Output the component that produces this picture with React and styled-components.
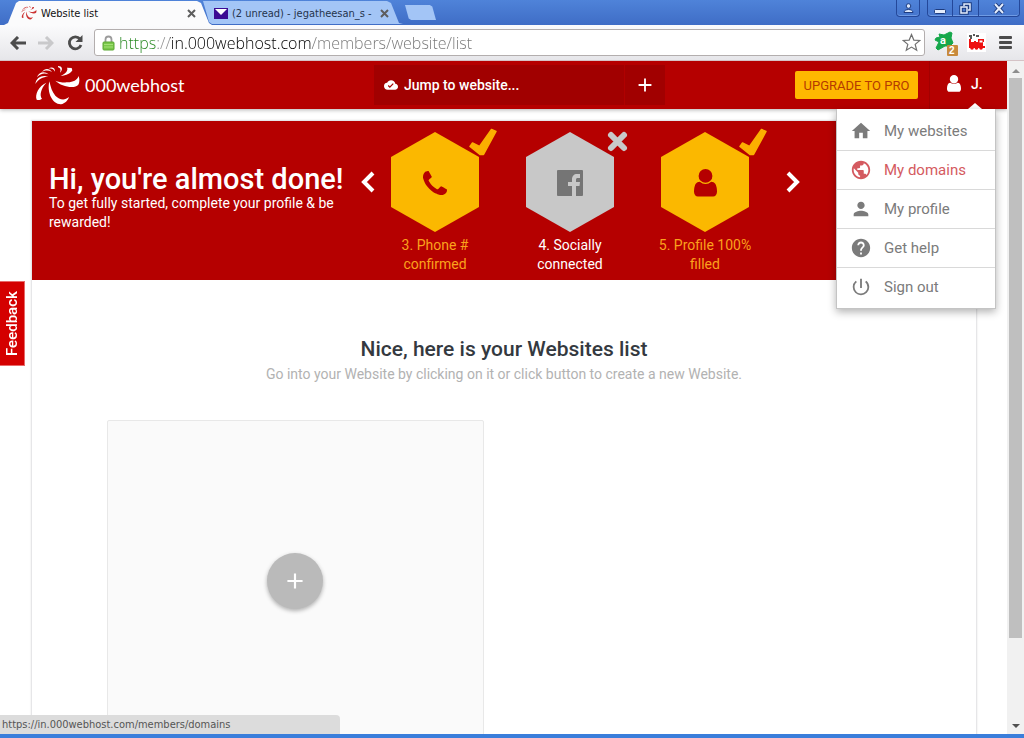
import React from "react";
import styled, { createGlobalStyle } from "styled-components";
import {
  MdAdd,
  MdCloudDone,
  MdHelp,
  MdHome,
  MdPerson,
  MdPowerSettingsNew,
  MdPublic,
} from "react-icons/md";

const GlobalStyle = createGlobalStyle`
  * {
    box-sizing: border-box;
  }
  body {
    margin: 0;
    font-family: Roboto, "Liberation Sans", sans-serif;
    background: #fff;
  }
  button, input {
    font: inherit;
    border: 0;
    padding: 0;
    background: none;
    color: inherit;
  }
  a {
    color: inherit;
    text-decoration: none;
  }
  h1, h2, p, ul, ol {
    margin: 0;
    padding: 0;
  }
  ul, ol {
    list-style: none;
  }
  svg {
    display: block;
    flex-shrink: 0;
  }
`;

/* ---------- browser window ---------- */

const Window = styled.div`
  position: relative;
  display: flex;
  flex-direction: column;
  height: 100vh;
  overflow: hidden;
  border-bottom: 4px solid #3a7edb;
`;

const TitleBar = styled.div`
  display: flex;
  height: 25px;
  padding-left: 4px;
  background: linear-gradient(#4f83d9, #3f6dc6);
`;

const Tab = styled.div`
  display: flex;
  align-items: center;
  gap: 4px;
  width: ${(p) => (p.$active ? 208 : 200)}px;
  height: 24px;
  margin-top: 1px;
  margin-left: ${(p) => (p.$active ? 0 : -9)}px;
  padding: 0 ${(p) => (p.$active ? 16 : 14)}px 0 ${(p) => (p.$active ? 17 : 11)}px;
  font: 11px "DejaVu Sans Condensed", "DejaVu Sans", sans-serif;
  color: ${(p) => (p.$active ? "#111" : "#25344d")};
  background: ${(p) => (p.$active ? "#fbfbfc" : "#a3c5f6")};
  clip-path: ${(p) =>
    p.$active
      ? "polygon(0 100%, 4px 92%, 12px 8%, 15px 0, 193px 0, 197px 8%, 205px 92%, 100% 100%)"
      : "polygon(0 0, 184px 0, 188px 8%, 196px 92%, 100% 96%, 9px 96%, 6px 88%)"};
`;

const TabTitle = styled.span`
  flex: 1;
  overflow: hidden;
  white-space: nowrap;
`;

const TabClose = styled.button`
  display: flex;
  color: #5d5d5d;
`;

const NewTab = styled.button`
  width: 31px;
  height: 15px;
  margin: 5px 0 0 2px;
  background: #a3c5f6;
  clip-path: polygon(0 0, 80% 0, 88% 10%, 100% 100%, 20% 100%, 12% 90%);
`;

const WindowButtons = styled.div`
  display: flex;
  gap: 7px;
  height: 17px;
  margin-left: auto;
  padding-right: 4px;
`;

const ButtonGroup = styled.div`
  display: flex;
  border: 1px solid #24489a;
  border-top: 0;
  border-radius: 0 0 4px 4px;
  box-shadow: inset 0 -1px #6f9be4;
`;

const WindowButton = styled.button`
  display: flex;
  align-items: center;
  justify-content: center;
  width: ${(p) => p.$width}px;

  & + & {
    border-left: 1px solid #24489a;
  }
`;

const Toolbar = styled.div`
  display: flex;
  align-items: center;
  height: 36px;
  padding-left: 8px;
  background: linear-gradient(#fbfbfc, #e6e6ea);
  border-bottom: 1px solid #d5c3c6;
`;

const ToolButton = styled.button`
  display: flex;
  align-items: center;
  justify-content: center;
  width: ${(p) => p.$width}px;
  color: ${(p) => (p.$dim ? "#c9c9cb" : "#4c4c4c")};
`;

const AddressBar = styled.label`
  display: flex;
  flex: 1;
  align-items: center;
  gap: 4px;
  height: 27px;
  margin-left: 9px;
  padding: 0 3px 0 7px;
  background: #fff;
  border: 1px solid #b3aeae;
  border-radius: 3px;
`;

/* scheme, separator, host and path each get their own colour */
const Address = styled.input`
  flex: 1;
  min-width: 0;
  height: 24px;
  outline: 0;
  font: 300 16px "Open Sans", "Noto Sans", sans-serif;
  color: #222;
  background: linear-gradient(
    90deg,
    #23861c 38px,
    #8a8a8a 38px 51px,
    #000 51px 192px,
    #757575 192px
  );
  background-clip: text;
  -webkit-text-fill-color: transparent;
`;

const StatusBubble = styled.div`
  position: absolute;
  left: 0;
  bottom: 0;
  width: 340px;
  height: 19px;
  padding-left: 2px;
  font: 11px/20px "DejaVu Sans Condensed", "DejaVu Sans", sans-serif;
  color: #555;
  background: #dcdcdc;
  border-radius: 0 4px 0 0;
`;

const Viewport = styled.div`
  display: flex;
  flex: 1;
  min-height: 0;
`;

const ScrollBar = styled.div`
  display: flex;
  flex-direction: column;
  align-items: center;
  width: 17px;
  padding: 7px 0 5px;
  background: #f1f1f1;
`;

const Thumb = styled.div`
  width: 13px;
  height: 560px;
  margin-top: 5px;
  margin-bottom: auto;
  background: #bfbfbf;
`;

/* ---------- page ---------- */

const Page = styled.div`
  position: relative;
  flex: 1;
  min-width: 0;
  overflow: hidden;
`;

const Header = styled.header`
  position: relative;
  display: flex;
  align-items: center;
  height: 48px;
  padding-left: 34px;
  color: #fff;
  background: #b50000;
  box-shadow: 0 1px 4px rgba(0, 0, 0, 0.3);
`;

const Logo = styled.a`
  display: flex;
  align-items: center;
  gap: 4px;
  width: 340px;
  font: 18px/40px Lato, sans-serif;
`;

const JumpBar = styled.div`
  display: flex;
  width: 291px;
  height: 40px;
  background: #a10000;
`;

const JumpField = styled.label`
  display: flex;
  flex: 1;
  align-items: center;
  gap: 6px;
  padding-left: 10px;
`;

const JumpInput = styled.input`
  flex: 1;
  min-width: 0;
  outline: 0;
  font-size: 14px;
  font-weight: 500;

  &::placeholder {
    color: #fff;
    opacity: 1;
  }
`;

const JumpAdd = styled.button`
  display: flex;
  align-items: center;
  justify-content: center;
  width: 41px;
  border-left: 1px solid #b00000;
`;

const Account = styled.div`
  display: flex;
  align-items: center;
  align-self: stretch;
  margin-left: auto;
`;

const Upgrade = styled.button`
  width: 123px;
  height: 28px;
  margin-right: 11px;
  font-size: 13px;
  color: #b53a00;
  background: #ffb800;
  border-radius: 2px;
`;

const UserButton = styled.button`
  position: relative;
  display: flex;
  align-items: center;
  align-self: stretch;
  gap: 10px;
  width: 78px;
  padding: 0 0 3px 17px;
  font-size: 14px;
  font-weight: 500;
  border-left: 1px solid #a30000;

  &::after {
    content: "";
    position: absolute;
    right: 25px;
    bottom: 0;
    border: 7px solid transparent;
    border-top: 0;
    border-bottom: 6px solid #fff;
  }
`;

const Menu = styled.ul`
  position: absolute;
  z-index: 1;
  top: 48px;
  right: 11px;
  width: 160px;
  padding: 2px 0;
  background: #fff;
  border: 1px solid #c4c4c4;
  border-top: 0;
  box-shadow: 0 3px 8px rgba(0, 0, 0, 0.3);
`;

const MenuItem = styled.li`
  & + & {
    border-top: 1px solid #d9d9d9;
  }
`;

const MenuLink = styled.a`
  display: flex;
  align-items: center;
  gap: 12px;
  height: 38px;
  padding-left: 13px;
  font-size: 15px;
  color: ${(p) => (p.$active ? "#d45a60" : "#7b7b7b")};

  ${MenuItem}:first-child & {
    height: 39px;
  }
`;

const Content = styled.main`
  margin: 11px 30px 0 31px;
  background: #fff;
  border: 1px solid #e6e6e8;
  box-shadow: 0 0 2px rgba(0, 0, 0, 0.1);
`;

const Banner = styled.section`
  display: flex;
  height: 159px;
  padding-left: 17px;
  color: #fff;
  background: #b50000;
`;

const Greeting = styled.div`
  width: 312px;
  padding-top: 43px;
`;

const GreetingTitle = styled.h1`
  font-size: 29px;
  line-height: 30px;
  font-weight: 500;
  white-space: nowrap;
`;

const GreetingText = styled.p`
  width: 290px;
  font-size: 14px;
  line-height: 19px;
`;

const Arrow = styled.button`
  display: flex;
  align-self: flex-start;
  margin-top: 50px;
`;

const Steps = styled.ol`
  display: flex;
  gap: 23px;
  margin: 0 25px 0 4px;
`;

const Step = styled.li`
  width: 112px;
  padding-top: 11px;
  text-align: center;
`;

const StepShape = styled.div`
  position: relative;
  width: 88px;
  margin: 0 auto 4px;
`;

const Hexagon = styled.div`
  display: flex;
  align-items: center;
  justify-content: center;
  height: 100px;
  padding-top: 2px;
  color: ${(p) => (p.$done ? "#b50000" : "#757575")};
  background: ${(p) => (p.$done ? "#fbb800" : "#c8c8c8")};
  clip-path: polygon(50% 0, 100% 25%, 100% 75%, 50% 100%, 0 75%, 0 25%);
`;

const Badge = styled.span`
  position: absolute;
  top: -4px;
  right: -18px;
`;

const StepLabel = styled.p`
  font-size: 14px;
  line-height: 19px;
  color: ${(p) => (p.$done ? "#fba21c" : "#fff")};
`;

const Intro = styled.div`
  padding: 56px 0 34px;
  text-align: center;
`;

const IntroTitle = styled.h2`
  font-size: 21px;
  line-height: 26px;
  font-weight: 500;
  color: #34393f;
`;

const IntroText = styled.p`
  font-size: 14px;
  line-height: 24px;
  color: #b2b2b2;
`;

const Sites = styled.div`
  display: grid;
  grid-template-columns: 1fr 1fr;
  gap: 40px;
  padding: 0 76px 40px 75px;
`;

const NewSite = styled.div`
  display: flex;
  align-items: center;
  justify-content: center;
  height: 322px;
  background: #fafafa;
  border: 1px solid #e8e8e8;
  border-radius: 2px;
`;

const RoundButton = styled.button`
  display: flex;
  align-items: center;
  justify-content: center;
  width: 56px;
  height: 56px;
  color: #fff;
  background: #bababa;
  border-radius: 50%;
  box-shadow: 0 2px 4px rgba(0, 0, 0, 0.3);
`;

const Feedback = styled.button`
  position: absolute;
  left: 0;
  top: 220px;
  width: 25px;
  height: 85px;
  font-size: 15px;
  font-weight: 500;
  color: #fff;
  background: #d40000;
  border: 1px solid #e86a6a;
  border-right: 0;
  writing-mode: vertical-rl;
  transform: rotate(180deg);
`;

/* ---------- drawings ---------- */

const Swirl = ({ width, color = "#fff" }) => (
  <svg width={width} height={(width * 40) / 47} viewBox="104 26 141 120" fill={color}>
    <path d="M150 75C142 110 160 145 185 144c12-2 21-12 24-22-14 12-29 8-41-4-10-11-14-26-18-43z" />
    <path d="M168 73c17 17 57 26 69 12 4-6 4-16 1-26-5 13-16 18-33 19-15 1-27-1-37-5z" />
    <path d="M184 59c17-1 31-8 35-17l-2-7-14-1c4 8-3 17-19 25z" />
    <path d="M176 29c13 0 16 11 6 20 3-8 2-14-6-16z" />
    <path d="M141 79c-23 9-35 36-29 51 5 2 12 1 16-3-8-9-4-30 13-48z" />
    <path d="M108 83c3-20 20-28 39-22-17 0-29 7-39 22z" />
    <path d="M113 62c6-15 22-19 35-8-14-5-24-2-35 8z" />
    <path d="M128 47c8-12 22-12 30 0-10-5-19-6-30 0z" />
    <path d="M148 36c10-6 20-1 19 10-4-7-9-10-19-10z" />
  </svg>
);

const User = ({ width }) => (
  <svg width={width} height={(width * 6) / 5} viewBox="0 128 1280 1536" fill="currentColor">
    <path d="M1280 1399q0 109-62.500 187t-150.500 78h-854q-88 0-150.500-78t-62.500-187q0-85 8.500-160.500t31.500-152 58.500-131 94-89 134.500-34.500q131 128 313 128t313-128q76 0 134.500 34.500t94 89 58.500 131 31.500 152 8.500 160.500zm-256-887q0 159-112.500 271.500t-271.500 112.500-271.500-112.500-112.500-271.500 112.500-271.500 271.500-112.500 271.500 112.500 112.500 271.500z" />
  </svg>
);

const Phone = () => (
  <svg width="24" height="24" viewBox="0 0 1408 1408" fill="currentColor">
    <path d="M1408 1112q0 27-10 70.500t-21 68.500q-21 50-122 106-94 51-186 51-27 0-53-3.500t-57.500-12.500-47-14.500-55.500-20.500-49-18q-98-35-175-83-127-79-264-216t-216-264q-48-77-83-175-3-9-18-49t-20.500-55.500-14.500-47-12.500-57.500-3.500-53q0-92 51-186 56-101 106-122 25-11 68.500-21t70.500-10q14 0 21 3 18 6 53 76 11 19 30 54t35 63.500 31 53.500q3 4 17.500 25t21.500 35.500 7 28.500q0 20-28.500 50t-62 55-62 53-28.500 46q0 9 5 22.500t8.500 20.500 14 24 11.500 19q76 137 174 235t235 174q2 1 19 11.500t24 14 20.500 8.500 22.500 5q18 0 46-28.500t53-62 55-62 50-28.500q14 0 28.500 7t35.500 21.500 25 17.500q25 15 53.500 31t63.500 35 54 30q70 35 76 53 3 7 3 21z" />
  </svg>
);

const FacebookSquare = () => (
  <svg width="26" height="26" viewBox="0 0 26 26">
    <rect width="26" height="26" rx="1" fill="#757575" />
    <path
      d="M15 26V16h-4v-4h4V9.500C15 6 17 4 20 4h3v4h-2c-1.500 0-2 .6-2 2v2h4l-.5 4H19v10z"
      fill="#c8c8c8"
    />
  </svg>
);

const Check = () => (
  <svg width="28" height="28" viewBox="0 0 28 28" fill="#fbb000" stroke="#fbb000">
    <path
      d="M1 18.500L3.500 15l7 3.500L22.500 1.500 27 3.500 14.500 26.500 11 26.500z"
      strokeWidth="1.500"
      strokeLinejoin="round"
    />
  </svg>
);

const Cross = () => (
  <svg width="28" height="28" viewBox="0 0 28 28" stroke="#c8c8c8" strokeWidth="6" strokeLinecap="round">
    <path d="M7 7l13 13M20 7L7 20" />
  </svg>
);

const Chevron = ({ right }) => (
  <svg width="14" height="22" viewBox="0 0 14 22" fill="none" stroke="#fff" strokeWidth="4">
    <path d={right ? "M2 2l9 9-9 9" : "M12 2l-9 9 9 9"} />
  </svg>
);

const NavArrow = ({ forward }) => (
  <svg width="16" height="14" viewBox="0 0 16 14" fill="none" stroke="currentColor" strokeWidth="3">
    <path d={forward ? "M0 7h14M8 1l6 6-6 6" : "M16 7H2M8 1L2 7l6 6"} />
  </svg>
);

const Reload = () => (
  <svg width="16" height="16" viewBox="0 0 16 16" fill="none">
    <path d="M13 4A6 6 0 1 0 14 10" stroke="currentColor" strokeWidth="2.800" />
    <path d="M15.500 0v7h-7z" fill="currentColor" />
  </svg>
);

const CloseMark = () => (
  <svg width="9" height="9" viewBox="0 0 9 9" stroke="currentColor" strokeWidth="2">
    <path d="M1 1l7 7M8 1L1 8" />
  </svg>
);

const Mail = () => (
  <svg width="14" height="11" viewBox="0 0 14 11">
    <rect width="14" height="11" fill="#3c0b93" />
    <path d="M1 1l6 6 6-6" fill="#fff" />
  </svg>
);

const Lock = () => (
  <svg width="13" height="16" viewBox="0 0 13 16">
    <path d="M3.500 8V4.500a3 3 0 016 0V8" fill="none" stroke="#9b9b9b" strokeWidth="1.800" />
    <rect x="1" y="7" width="11" height="8" rx="1" fill="#7ac74a" stroke="#5aa833" />
    <path d="M2 9.500h9M2 12h9" stroke="#a4e077" />
  </svg>
);

const Star = () => (
  <svg width="19" height="19" viewBox="0 0 19 19" fill="#fff" stroke="#707070">
    <path
      d="M9.500 1.500l2.300 5.600 6 .4-4.600 3.900 1.500 5.900-5.200-3.200-5.200 3.200 1.500-5.900L1.200 7.500l6-.4z"
      strokeWidth="1.200"
    />
  </svg>
);

const Avast = () => (
  <svg width="24" height="26" viewBox="0 0 24 26">
    <path
      d="M5 4l5 1 6-3 2 1-1 5 2 5-3 3h-5l-7 4-2-2 3-6-4-2 1-2 4-1z"
      fill="#16a84b"
      stroke="#16a84b"
      strokeLinejoin="round"
    />
    <text x="6" y="14" fontFamily="Roboto" fontSize="11" fontWeight="700" fill="#fff">
      a
    </text>
    <rect x="13" y="15" width="11" height="11" rx="1" fill="#c88a3c" />
    <text x="15" y="24" fontFamily="Liberation Sans" fontSize="10" fontWeight="700" fill="#fff">
      2
    </text>
  </svg>
);

const Train = () => (
  <svg width="19" height="19" viewBox="0 0 19 19">
    <rect width="19" height="19" fill="#fff" />
    <path d="M2 3h3M6 2h2M9 3h3M3 5h2" stroke="#222" strokeWidth="1.500" />
    <path d="M2 6h2v3h3V8h2v1h2V6h6v3h-1v4h2v2H2z" fill="#ee1111" />
    <path d="M12.500 7.500h3v2h-3z" fill="#fff" />
    <circle cx="5" cy="15" r="1.800" fill="#e11" />
    <circle cx="9.500" cy="15" r="1.800" fill="#e11" />
    <circle cx="14" cy="15" r="1.800" fill="#e11" />
  </svg>
);

const Bars = () => (
  <svg width="13" height="13" viewBox="0 0 13 13" fill="#4c4c4c">
    <rect width="13" height="3" rx="1" />
    <rect y="5" width="13" height="3" rx="1" />
    <rect y="10" width="13" height="3" rx="1" />
  </svg>
);

const Profile = () => (
  <svg width="11" height="10" viewBox="0 0 11 10" fill="#dbe7fb" stroke="#1d3c80">
    <path d="M1 9.500c0-4 9-4 9 0z" />
    <circle cx="5.500" cy="3" r="2.300" />
  </svg>
);

const Minimize = () => (
  <svg width="12" height="12" viewBox="0 0 12 12">
    <rect x=".5" y="7.500" width="11" height="4" rx="1" fill="#e4edfc" stroke="#1d3c80" />
  </svg>
);

const Restore = () => (
  <svg width="13" height="13" viewBox="0 0 13 13" fill="none">
    <path d="M5 4V2h6v6H9M2 5h6v6H2z" stroke="#1d3c80" strokeWidth="3.500" />
    <path d="M5 4V2h6v6H9M2 5h6v6H2z" stroke="#e4edfc" strokeWidth="1.500" />
  </svg>
);

const CloseWindow = () => (
  <svg width="12" height="11" viewBox="0 0 12 11">
    <path d="M2 1l8 9M10 1L2 10" stroke="#1d3c80" strokeWidth="4" />
    <path d="M2 1l8 9M10 1L2 10" stroke="#e4edfc" strokeWidth="2" />
  </svg>
);

const ScrollArrow = ({ down }) => (
  <svg width="8" height="5" viewBox="0 0 8 5" fill={down ? "#505050" : "#8d8d8d"}>
    <path d={down ? "M0 0h8L4 4z" : "M0 5h8L4 1z"} />
  </svg>
);

/* ---------- data ---------- */

const menu = [
  { label: "My websites", Icon: MdHome },
  { label: "My domains", Icon: MdPublic, active: true },
  { label: "My profile", Icon: MdPerson },
  { label: "Get help", Icon: MdHelp },
  { label: "Sign out", Icon: MdPowerSettingsNew },
];

const steps = [
  { label: "3. Phone # confirmed", icon: <Phone />, done: true },
  { label: "4. Socially connected", icon: <FacebookSquare />, done: false },
  { label: "5. Profile 100% filled", icon: <User width={23} />, done: true },
];

const BrowserChrome = () => (
  <>
    <TitleBar>
      <Tab $active>
        <Swirl width={16} color="#c33" />
        <TabTitle>Website list</TabTitle>
        <TabClose aria-label="Close tab">
          <CloseMark />
        </TabClose>
      </Tab>
      <Tab>
        <Mail />
        <TabTitle>(2 unread) - jegatheesan_s -</TabTitle>
        <TabClose aria-label="Close tab">
          <CloseMark />
        </TabClose>
      </Tab>
      <NewTab aria-label="New tab" />
      <WindowButtons>
        <ButtonGroup>
          <WindowButton $width={22} aria-label="Profile">
            <Profile />
          </WindowButton>
        </ButtonGroup>
        <ButtonGroup>
          <WindowButton $width={24} aria-label="Minimize">
            <Minimize />
          </WindowButton>
          <WindowButton $width={26} aria-label="Restore">
            <Restore />
          </WindowButton>
          <WindowButton $width={41} aria-label="Close">
            <CloseWindow />
          </WindowButton>
        </ButtonGroup>
      </WindowButtons>
    </TitleBar>
    <Toolbar>
      <ToolButton aria-label="Back" $width={19}>
        <NavArrow />
      </ToolButton>
      <ToolButton aria-label="Forward" $width={38} $dim>
        <NavArrow forward />
      </ToolButton>
      <ToolButton aria-label="Reload" $width={20}>
        <Reload />
      </ToolButton>
      <AddressBar>
        <Lock />
        <Address
          aria-label="Address"
          defaultValue="https://in.000webhost.com/members/website/list"
          spellCheck={false}
        />
        <Star />
      </AddressBar>
      <ToolButton aria-label="Avast" $width={41}>
        <Avast />
      </ToolButton>
      <ToolButton aria-label="Train" $width={20}>
        <Train />
      </ToolButton>
      <ToolButton aria-label="Menu" $width={38}>
        <Bars />
      </ToolButton>
    </Toolbar>
  </>
);

const App = () => (
  <Window>
    <GlobalStyle />
    <BrowserChrome />
    <Viewport>
      <Page>
        <Header>
          <Logo href="#">
            <Swirl width={47} />
            000webhost
          </Logo>
          <JumpBar>
            <JumpField>
              <MdCloudDone size={14} />
              <JumpInput aria-label="Jump to website" placeholder="Jump to website..." />
            </JumpField>
            <JumpAdd aria-label="Add website">
              <MdAdd size={22} />
            </JumpAdd>
          </JumpBar>
          <Account>
            <Upgrade>UPGRADE TO PRO</Upgrade>
            <UserButton>
              <User width={14} />
              J.
            </UserButton>
          </Account>
          <Menu>
            {menu.map(({ label, Icon, active }) => (
              <MenuItem key={label}>
                <MenuLink href="#" $active={active}>
                  <Icon size={22} />
                  {label}
                </MenuLink>
              </MenuItem>
            ))}
          </Menu>
        </Header>
        <Content>
          <Banner>
            <Greeting>
              <GreetingTitle>Hi, you're almost done!</GreetingTitle>
              <GreetingText>
                To get fully started, complete your profile & be rewarded!
              </GreetingText>
            </Greeting>
            <Arrow aria-label="Previous">
              <Chevron />
            </Arrow>
            <Steps>
              {steps.map(({ label, icon, done }) => (
                <Step key={label}>
                  <StepShape>
                    <Hexagon $done={done}>{icon}</Hexagon>
                    <Badge>{done ? <Check /> : <Cross />}</Badge>
                  </StepShape>
                  <StepLabel $done={done}>{label}</StepLabel>
                </Step>
              ))}
            </Steps>
            <Arrow aria-label="Next">
              <Chevron right />
            </Arrow>
          </Banner>
          <Intro>
            <IntroTitle>Nice, here is your Websites list</IntroTitle>
            <IntroText>
              Go into your Website by clicking on it or click button to create a new Website.
            </IntroText>
          </Intro>
          <Sites>
            <NewSite>
              <RoundButton aria-label="Create a new website">
                <MdAdd size={26} />
              </RoundButton>
            </NewSite>
          </Sites>
        </Content>
        <Feedback>Feedback</Feedback>
      </Page>
      <ScrollBar>
        <ScrollArrow />
        <Thumb />
        <ScrollArrow down />
      </ScrollBar>
    </Viewport>
    <StatusBubble>https://in.000webhost.com/members/domains</StatusBubble>
  </Window>
);

export default App;
